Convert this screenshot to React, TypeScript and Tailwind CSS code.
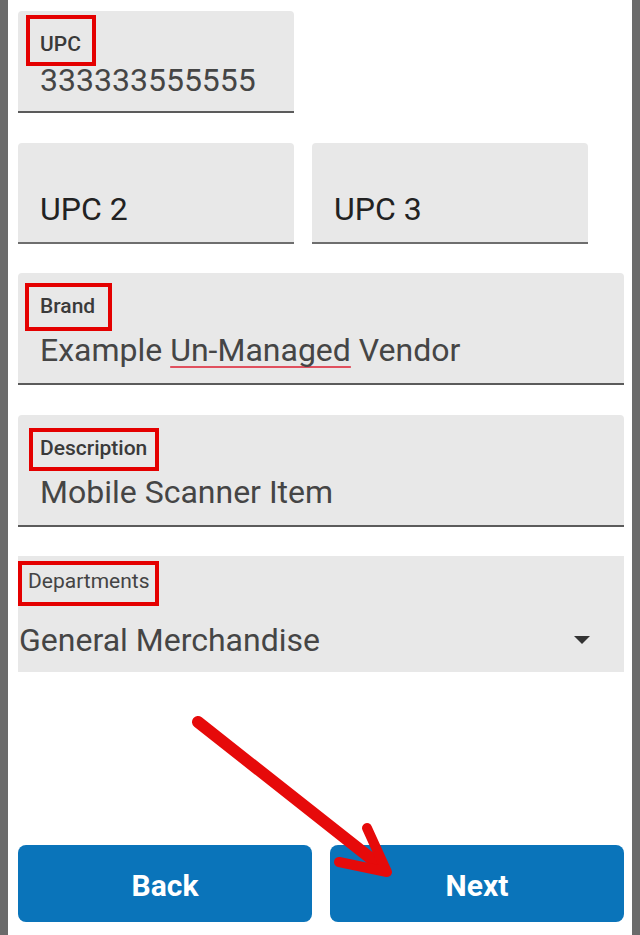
const font = "font-['Roboto','Liberation_Sans',sans-serif]";

type BoxProps = { className: string };

// red annotation rectangle drawn over a label
const Mark = ({ className }: BoxProps) => (
  <span className={`pointer-events-none absolute border-4 border-[#e40000] ${className}`} />
);

const TextField = ({
  label,
  value,
  mark,
  labelTop,
  gap,
  height,
  width = "w-full",
}: {
  label: string;
  value: React.ReactNode;
  mark: string;
  labelTop: string;
  gap: string;
  height: string;
  width?: string;
}) => (
  <div className={`relative ${width} ${height} shrink-0 rounded-t-[4px] border-b-2 border-[#5b5b5b] bg-[#e8e8e8]`}>
    <Mark className={mark} />
    <div className={`flex flex-col pl-[22px] ${labelTop} ${gap}`}>
      <span className="text-[21px] leading-[24px] font-medium text-[#3a3a3a]">{label}</span>
      <span className="text-[32px] leading-[36px] text-[#454545] whitespace-nowrap">{value}</span>
    </div>
  </div>
);

const EmptyField = ({ text }: { text: string }) => (
  <div className="h-[101px] rounded-t-[4px] border-b-2 border-[#6e6e6e] bg-[#e8e8e8] pl-[22px] pt-[48px]">
    <span className="text-[32px] leading-[36px] text-[#222]">{text}</span>
  </div>
);

export default function App() {
  return (
    <div className={`relative flex h-[935px] w-full overflow-hidden bg-white ${font}`}>
      <div className="w-2 shrink-0 bg-[#6b6b6b]" />

      <main className="flex flex-1 flex-col pl-[10px] pr-2 pt-[11px]">
        <TextField
          label="UPC"
          value="333333555555"
          width="w-[276px]"
          height="h-[102px]"
          labelTop="pt-[21px]"
          gap="gap-[6px]"
          mark="left-[8px] top-[4px] h-[51px] w-[70px]"
        />

        <div className="mt-[30px] grid w-[570px] grid-cols-2 gap-[18px]">
          <EmptyField text="UPC 2" />
          <EmptyField text="UPC 3" />
        </div>

        <div className="mt-[29px]">
          <TextField
            label="Brand"
            value={
              <>
                Example{" "}
                <span className="underline decoration-[#e0505e] decoration-2 underline-offset-[5px] [text-decoration-skip-ink:none]">
                  Un-Managed
                </span>{" "}
                Vendor
              </>
            }
            height="h-[112px]"
            labelTop="pt-[21px]"
            gap="gap-[14px]"
            mark="left-[7px] top-[10px] h-[48px] w-[87px]"
          />
        </div>

        <div className="mt-[30px]">
          <TextField
            label="Description"
            value="Mobile Scanner Item"
            height="h-[112px]"
            labelTop="pt-[21px]"
            gap="gap-[14px]"
            mark="left-[11px] top-[13px] h-[43px] w-[130px]"
          />
        </div>

        {/* department picker */}
        <div className="relative mt-[29px] h-[116px] bg-[#e8e8e8]">
          <Mark className="left-0 top-[5px] h-[45px] w-[141px]" />
          <div className="flex flex-col pt-[13px]">
            <span className="pl-[10px] text-[21px] leading-[24px] text-[#444]">Departments</span>
            <div className="mt-[29px] flex items-center justify-between pl-px pr-[34px]">
              <span className="text-[32px] leading-[36px] text-[#454545]">General Merchandise</span>
              <svg width="16" height="8" viewBox="0 0 16 8">
                <polygon points="0,0 16,0 8,8" fill="#333" />
              </svg>
            </div>
          </div>
        </div>

        <div className="mt-[173px] grid grid-cols-2 gap-[18px]">
          <button className="h-[77px] rounded-[8px] bg-[#0a74ba] pt-1 text-[30px] font-bold text-white">Back</button>
          <button className="h-[77px] rounded-[8px] bg-[#0a74ba] pt-1 text-[30px] font-bold text-white">Next</button>
        </div>
      </main>

      <div className="w-2 shrink-0 bg-[#6b6b6b]" />

      {/* annotation arrow pointing at Next */}
      <svg className="pointer-events-none absolute left-0 top-0" width="640" height="935">
        <g stroke="#e60a0a" strokeLinecap="round" strokeLinejoin="round" fill="none">
          <line x1="198" y1="722" x2="383" y2="868" strokeWidth="12" />
          <polyline points="367,828 387,872 339,862" strokeWidth="10" />
        </g>
      </svg>
    </div>
  );
}
